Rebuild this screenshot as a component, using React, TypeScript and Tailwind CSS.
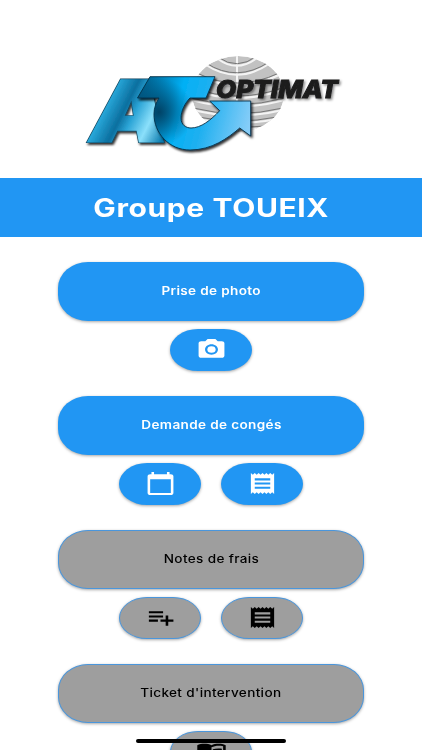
import type { ReactNode } from "react"
import {
  MdCalendarToday,
  MdCameraAlt,
  MdMenuBook,
  MdPlaylistAdd,
  MdReceipt,
} from "react-icons/md"

interface ButtonProps {
  disabled?: boolean
  children: ReactNode
}

const ACTIVE = "bg-[#2196f3] text-white"
const DISABLED = "bg-[#9e9e9e] text-black border border-[#4a96dc]"

function MenuButton({ disabled, children }: ButtonProps) {
  return (
    <button
      className={`flex h-[59px] w-[306px] shrink-0 items-center justify-center rounded-[30px/26px] pt-px shadow-[0_1px_3px_rgba(0,0,0,0.35)] ${
        disabled ? DISABLED : ACTIVE
      }`}
    >
      <span
        className={`scale-x-[1.18] text-[11.5px] tracking-[0.3px] whitespace-nowrap ${
          disabled ? "font-medium" : "font-semibold"
        }`}
      >
        {children}
      </span>
    </button>
  )
}

function IconButton({ disabled, children }: ButtonProps) {
  return (
    <button
      className={`flex h-[42px] w-[82px] shrink-0 items-center justify-center rounded-[28px/21px] pb-px shadow-[0_1px_3px_rgba(0,0,0,0.35)] ${
        disabled ? DISABLED : ACTIVE
      }`}
    >
      {children}
    </button>
  )
}

function Section({ children }: { children: ReactNode }) {
  return <section className="flex h-[134px] shrink-0 flex-col items-center gap-2">{children}</section>
}

const ICON = "h-[25px] w-[31px]"

const ARROW =
  "M151 76.7H216L207 98H191C186 103 182 111 182 118C182 125 187 128 192 128C202 128 212 120 220.7 110.7L210.7 101H251.7V136L240.7 128C229 138 213 150 191 150C170 150 155 133 155 114C155 108 157 103 160 98H138.5Z"

function Logo() {
  return (
    <svg viewBox="75 45 275 120" className="h-[120px] w-[275px]">
      <defs>
        <linearGradient id="letter" x1="0" y1="0.3" x2="1" y2="0.75">
          <stop offset="0" stopColor="#4ecbf5" />
          <stop offset="0.2" stopColor="#29a9db" />
          <stop offset="0.42" stopColor="#0b6f9f" />
          <stop offset="0.55" stopColor="#2ba4d6" />
          <stop offset="0.76" stopColor="#8be0fb" />
          <stop offset="1" stopColor="#0879ad" />
        </linearGradient>
        <linearGradient id="arrow" gradientUnits="userSpaceOnUse" x1="140" y1="90" x2="252" y2="118">
          <stop offset="0" stopColor="#045a86" />
          <stop offset="0.12" stopColor="#0577ab" />
          <stop offset="0.36" stopColor="#02b0f5" />
          <stop offset="0.6" stopColor="#1fb0f0" />
          <stop offset="1" stopColor="#86cdf8" />
        </linearGradient>
        <radialGradient id="shade" gradientUnits="userSpaceOnUse" cx="160" cy="112" r="34">
          <stop offset="0" stopColor="#003554" stopOpacity="0.85" />
          <stop offset="0.35" stopColor="#003554" stopOpacity="0.55" />
          <stop offset="1" stopColor="#003554" stopOpacity="0" />
        </radialGradient>
        <filter id="drop" x="-10%" y="-10%" width="125%" height="130%">
          <feDropShadow dx="1.5" dy="2" stdDeviation="1" floodColor="#000" floodOpacity="0.8" />
        </filter>
        <filter id="softDrop" x="-5%" y="-20%" width="112%" height="150%">
          <feDropShadow dx="1.5" dy="1.5" stdDeviation="0.9" floodColor="#000" floodOpacity="0.45" />
        </filter>
        <clipPath id="globe">
          <ellipse cx="239" cy="94" rx="46" ry="38" />
        </clipPath>
      </defs>

      <g clipPath="url(#globe)">
        <ellipse cx="239" cy="94" rx="46" ry="38" fill="#c2c2c2" />
        <g fill="none" stroke="#f4f4f4" strokeWidth="2">
          <path d="M238 55V133" />
          <path d="M219 59Q238 73 258 58M207 65Q238 85 270 64M198 75Q238 95 280 75M192 89Q238 107 286 89M192 100Q238 113 286 100M194 110Q238 121 284 110M199 119Q238 127 278 119M210 128Q238 131 268 128" />
        </g>
        <g fill="none" stroke="#777" strokeWidth="1">
          <path d="M219 57Q238 71 258 56M207 63Q238 83 270 62M198 73Q238 93 280 73M192 87Q238 105 286 87M192 98Q238 111 286 98M194 108Q238 119 284 108M199 117Q238 125 278 117M210 126Q238 129 268 126" />
        </g>
      </g>

      <g filter="url(#drop)" fontFamily="Inter, sans-serif" fontWeight="900" fontSize="83">
        <text
          transform="translate(88 140.5) skewX(-9) scale(1.17 1)"
          fill="#12465f"
          stroke="#12465f"
          strokeWidth="4"
        >
          A
        </text>
        <text
          transform="translate(88 140.5) skewX(-9) scale(1.17 1)"
          fill="url(#letter)"
          stroke="url(#letter)"
          strokeWidth="2.8"
        >
          A
        </text>
      </g>

      <path d={ARROW} fill="url(#arrow)" stroke="#073047" strokeWidth="0.9" filter="url(#drop)" />
      <path d={ARROW} fill="url(#shade)" />

      <text
        x="217"
        y="97.5"
        fontFamily="Inter, sans-serif"
        fontWeight="800"
        fontStyle="italic"
        fontSize="25"
        textLength="122"
        lengthAdjust="spacingAndGlyphs"
        fill="#1c1c1e"
        stroke="#1c1c1e"
        strokeWidth="1.1"
        filter="url(#softDrop)"
      >
        OPTIMAT
      </text>
    </svg>
  )
}

export default function App() {
  return (
    <div className="relative flex h-[750px] w-[422px] flex-col overflow-hidden bg-white font-[Inter,'Noto_Sans',sans-serif]">
      <div className="flex h-[178px] shrink-0 justify-center pt-[45px]">
        <Logo />
      </div>

      <header className="flex h-[59px] shrink-0 items-center justify-center bg-[#2196f3] pt-0.5">
        <h1 className="scale-x-[1.2] text-[25px] font-bold tracking-[0.5px] whitespace-nowrap text-white">
          Groupe TOUEIX
        </h1>
      </header>

      <main className="flex flex-col pt-[25px]">
        <Section>
          <MenuButton>Prise de photo</MenuButton>
          <IconButton>
            <MdCameraAlt preserveAspectRatio="none" className={ICON} />
          </IconButton>
        </Section>

        <Section>
          <MenuButton>Demande de congés</MenuButton>
          <div className="flex gap-5">
            <IconButton>
              <MdCalendarToday preserveAspectRatio="none" className={ICON} />
            </IconButton>
            <IconButton>
              <MdReceipt preserveAspectRatio="none" className={ICON} />
            </IconButton>
          </div>
        </Section>

        <Section>
          <MenuButton disabled>Notes de frais</MenuButton>
          <div className="flex gap-5">
            <IconButton disabled>
              <MdPlaylistAdd preserveAspectRatio="none" className={ICON} />
            </IconButton>
            <IconButton disabled>
              <MdReceipt preserveAspectRatio="none" className={ICON} />
            </IconButton>
          </div>
        </Section>

        <Section>
          <MenuButton disabled>Ticket d'intervention</MenuButton>
          <IconButton disabled>
            <MdMenuBook preserveAspectRatio="none" className={ICON} />
          </IconButton>
        </Section>
      </main>

      {/* Home indicator */}
      <div className="absolute top-[739px] left-[136px] h-[4px] w-[150px] rounded-full bg-black" />
    </div>
  )
}
